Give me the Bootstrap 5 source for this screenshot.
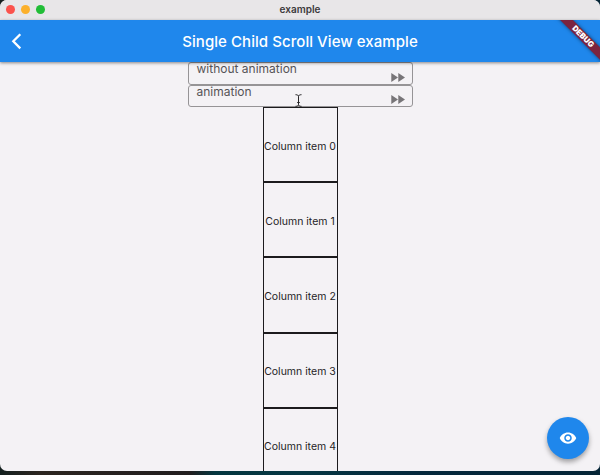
<!DOCTYPE html>
<html lang="en">
<head>
<meta charset="utf-8">
<meta name="viewport" content="width=device-width, initial-scale=1">
<title>example</title>
<link href="https://cdn.jsdelivr.net/npm/bootstrap@5.3.0/dist/css/bootstrap.min.css" rel="stylesheet">
<style>
  body { font-family: Inter, "Liberation Sans", sans-serif; height: 475px;
    background: linear-gradient(90deg, #14201f 0, #2c2520 40px, #211d1e 190px, #03363f 215px, #063743 300px, #05283c 420px, #052536 100%); }
  .app-window { height: 471px; border-radius: 7px; background: #f4f2f5; }
  .title-bar { height: 20px; background: #e8e6e8; font-size: 10px; font-weight: 600; color: #3c3a3c; padding-bottom: 2px; }
  .lights { left: 6px; top: 5px; gap: 6px; }
  .light { width: 9px; height: 9px; }
  .app-bar { height: 42px; background: #1f87ec; box-shadow: 0 1px 3px rgba(0,0,0,.45); z-index: 2; }
  .app-title { font-size: 15px; font-weight: 500; letter-spacing: .06px; line-height: 20px; padding-top: 1px; }
  .back { left: 10px; top: 13px; }
  .debug-corner { right: 0; top: 0; width: 60px; height: 42px; }
  .debug-ribbon { left: -7px; top: 12px; width: 100px; height: 9px; line-height: 9px; transform: rotate(45deg);
    background: #7b2440; font-size: 7.8px; font-weight: 900; box-shadow: 0 0 4px rgba(0,0,0,.5); }
  .field { width: 225px; height: 22.5px; border: 1px solid #969496; border-radius: 3px; font-size: 12px; line-height: 12px; color: #565457; padding-left: 8px; }
  .field svg { right: 7px; bottom: 2px; }
  .item { width: 75px; height: 75.2px; border: 1px solid #1c1b1d; font-size: 10.5px; color: #242325; white-space: nowrap; padding-top: 4px; }
  .item + .item { border-top-width: 1px; }
  .fab { right: 11px; bottom: 12px; width: 42px; height: 42px; background: #1f87ec; box-shadow: 0 3px 5px rgba(0,0,0,.35); }
  .text-cursor { left: 294px; top: 94px; z-index: 3; }
</style>
</head>
<body class="overflow-hidden">
<div class="app-window position-relative overflow-hidden d-flex flex-column">
  <header class="title-bar d-flex align-items-center justify-content-center position-relative flex-shrink-0">
    <div class="lights position-absolute d-flex">
      <span class="light rounded-circle" style="background:#fb524c"></span>
      <span class="light rounded-circle" style="background:#fcb02b"></span>
      <span class="light rounded-circle" style="background:#21bd37"></span>
    </div>
    <span>example</span>
  </header>
  <nav class="app-bar position-relative d-flex align-items-center justify-content-center text-white flex-shrink-0">
    <svg class="back position-absolute" width="14" height="17" viewBox="0 0 14 17" fill="none" stroke="#fff" stroke-width="2.3"><path d="M10.300 1.200 3.300 8.300l7 7.100"/></svg>
    <span class="app-title">Single Child Scroll View example</span>
    <div class="debug-corner position-absolute overflow-hidden">
      <div class="debug-ribbon position-absolute text-center text-white">DEBUG</div>
    </div>
  </nav>
  <main class="d-flex flex-column align-items-center flex-shrink-0">
    <div class="field position-relative">without animation
      <svg class="position-absolute" width="14" height="9" viewBox="0 0 14 9" fill="#777578"><path d="M.3 0 7 4.500.3 9zM7.300 0 14 4.500 7.300 9z"/></svg>
    </div>
    <div class="field position-relative">animation
      <svg class="position-absolute" width="14" height="9" viewBox="0 0 14 9" fill="#777578"><path d="M.3 0 7 4.500.3 9zM7.300 0 14 4.500 7.300 9z"/></svg>
    </div>
    <div class="item d-flex align-items-center justify-content-center">Column item 0</div>
    <div class="item d-flex align-items-center justify-content-center">Column item 1</div>
    <div class="item d-flex align-items-center justify-content-center">Column item 2</div>
    <div class="item d-flex align-items-center justify-content-center">Column item 3</div>
    <div class="item d-flex align-items-center justify-content-center">Column item 4</div>
  </main>
  <svg class="text-cursor position-absolute" width="9" height="13" viewBox="0 0 9 13" fill="none" stroke="#252426"><path d="M1.500.7c2 0 3 .6 3 1.800v8c0 1.200-1 1.800-3 1.800M7.500.7c-2 0-3 .6-3 1.800M7.500 12.300c-2 0-3-.6-3-1.800M3.200 8.500h2.600"/></svg>
  <button class="fab position-absolute btn p-0 border-0 rounded-circle d-flex align-items-center justify-content-center" aria-label="Show">
    <svg width="18" height="18" viewBox="0 0 24 24" fill="#fff"><path d="M12 4.500C7 4.500 2.730 7.610 1 12c1.730 4.390 6 7.500 11 7.500s9.270-3.110 11-7.500c-1.730-4.390-6-7.500-11-7.500zM12 17c-2.760 0-5-2.240-5-5s2.240-5 5-5 5 2.240 5 5-2.240 5-5 5zm0-8c-1.660 0-3 1.340-3 3s1.340 3 3 3 3-1.340 3-3-1.340-3-3-3z"/></svg>
  </button>
</div>
<script src="https://cdn.jsdelivr.net/npm/bootstrap@5.3.0/dist/js/bootstrap.bundle.min.js"></script>
</body>
</html>
